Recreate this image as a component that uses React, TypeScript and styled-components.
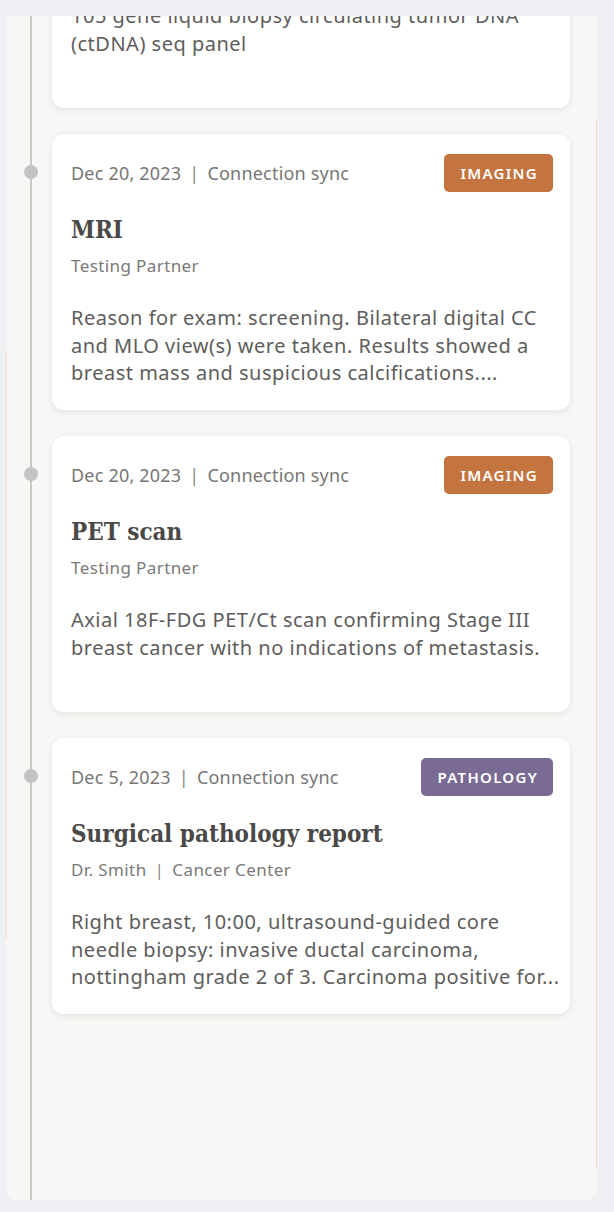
import React, { useLayoutEffect, useRef } from "react";
import styled, { createGlobalStyle } from "styled-components";

const GlobalStyle = createGlobalStyle`
  html, body {
    margin: 0;
    padding: 0;
    background: #eef0f4;
  }
  * { box-sizing: border-box; }
`;

const Page = styled.div`
  width: 614px;
  height: 1212px;
  padding: 16px 17px 12px 6px;
  background: #eef0f4;
`;

const Panel = styled.div`
  height: 1184px;
  border-radius: 0 0 10px 10px;
  overflow: hidden;
  background:
    linear-gradient(#cbc9c6, #cbc9c6) 24px 0 / 2px 100% no-repeat,
    linear-gradient(to bottom, transparent 104px, #f3dccd 104px, #f3dccd 1152px, transparent 1152px) right 0 top 0 / 1px 100% no-repeat,
    linear-gradient(to bottom, transparent 334px, #f5e3d7 334px, #f5e3d7 924px, transparent 924px) left 0 top 0 / 1px 100% no-repeat,
    #f8f7f5;
`;

const Scroller = styled.div`
  height: 100%;
  overflow-y: auto;
  scrollbar-width: none;
  &::-webkit-scrollbar { display: none; }
`;

const Timeline = styled.ul`
  list-style: none;
  margin: 0;
  padding: 24px 0 200px 0;
  display: flex;
  flex-direction: column;
  gap: 26px;
`;

const Item = styled.li`
  display: flex;
  align-items: flex-start;
`;

const Dot = styled.span`
  flex: none;
  width: 14px;
  height: 14px;
  margin: 31px 14px 0 18px;
  border-radius: 50%;
  background: #c4c3c1;
`;

const Card = styled.article`
  width: 518px;
  height: 276px;
  padding: 20px 10px 0 19px;
  background: #ffffff;
  border-radius: 12px;
  box-shadow: 0 2px 7px rgba(40, 30, 20, 0.09);
  font-family: "Noto Sans", "Open Sans", sans-serif;
`;

const Header = styled.div`
  display: flex;
  align-items: center;
  justify-content: space-between;
  height: 38px;
  padding-right: 7px;
`;

const Meta = styled.div`
  font-size: 18px;
  letter-spacing: 0.2px;
  color: #777675;
  display: flex;
  gap: 8px;
`;

const Sep = styled.span`
  color: #8a8988;
`;

const Badge = styled.span<{ $tone: string }>`
  display: inline-flex;
  align-items: center;
  height: 38px;
  padding: 0 15px 0 16px;
  border-radius: 5px;
  background: ${(p) => p.$tone};
  color: #ffffff;
  font-size: 15px;
  font-weight: 600;
  letter-spacing: 1.3px;
`;

const Title = styled.h3`
  margin: 22px 0 0 0;
  font-family: "DejaVu Serif", "Liberation Serif", serif;
  font-stretch: condensed;
  font-weight: 700;
  font-size: 24px;
  line-height: 32px;
  color: #4a4948;
`;

const Source = styled.div`
  margin-top: 8px;
  font-size: 17px;
  letter-spacing: 0.4px;
  line-height: 24px;
  color: #7b7a79;
  display: flex;
  gap: 8px;
`;

const Body = styled.p`
  margin: 26px 0 0 0;
  font-size: 20px;
  letter-spacing: 0.5px;
  line-height: 27.5px;
  color: #5e5d5c;
  display: -webkit-box;
  -webkit-line-clamp: 3;
  -webkit-box-orient: vertical;
  overflow: hidden;
`;

type Entry = {
  date: string;
  origin: string;
  kind: "IMAGING" | "PATHOLOGY" | "GENOMICS";
  title: string;
  source: string[];
  body: string;
};

const tones: Record<Entry["kind"], string> = {
  IMAGING: "#c4743f",
  PATHOLOGY: "#7a6b95",
  GENOMICS: "#4f7f86",
};

const entries: Entry[] = [
  {
    date: "Jan 8, 2024",
    origin: "Connection sync",
    kind: "GENOMICS",
    title: "Liquid biopsy",
    source: ["Testing Partner"],
    body: "105 gene liquid biopsy circulating tumor DNA (ctDNA) seq panel",
  },
  {
    date: "Dec 20, 2023",
    origin: "Connection sync",
    kind: "IMAGING",
    title: "MRI",
    source: ["Testing Partner"],
    body:
      "Reason for exam: screening. Bilateral digital CC and MLO view(s) were taken. Results showed a breast mass and suspicious calcifications....",
  },
  {
    date: "Dec 20, 2023",
    origin: "Connection sync",
    kind: "IMAGING",
    title: "PET scan",
    source: ["Testing Partner"],
    body:
      "Axial 18F-FDG PET/Ct scan confirming Stage III breast cancer with no indications of metastasis.",
  },
  {
    date: "Dec 5, 2023",
    origin: "Connection sync",
    kind: "PATHOLOGY",
    title: "Surgical pathology report",
    source: ["Dr. Smith", "Cancer Center"],
    body:
      "Right breast, 10:00, ultrasound-guided core needle biopsy: invasive ductal carcinoma, nottingham grade 2 of 3. Carcinoma positive for...",
  },
];

export default function App() {
  const scroller = useRef<HTMLDivElement>(null);
  useLayoutEffect(() => {
    if (scroller.current) scroller.current.scrollTop = 208;
  }, []);

  return (
    <>
      <GlobalStyle />
      <Page>
        <Panel>
          <Scroller ref={scroller}>
            <Timeline>
              {entries.map((e, i) => (
                <Item key={i}>
                  <Dot />
                  <Card>
                    <Header>
                      <Meta>
                        <span>{e.date}</span>
                        <Sep>|</Sep>
                        <span>{e.origin}</span>
                      </Meta>
                      <Badge $tone={tones[e.kind]}>{e.kind}</Badge>
                    </Header>
                    <Title>{e.title}</Title>
                    <Source>
                      {e.source.map((s, j) => (
                        <React.Fragment key={j}>
                          {j > 0 && <Sep>|</Sep>}
                          <span>{s}</span>
                        </React.Fragment>
                      ))}
                    </Source>
                    <Body>{e.body}</Body>
                  </Card>
                </Item>
              ))}
            </Timeline>
          </Scroller>
        </Panel>
      </Page>
    </>
  );
}
